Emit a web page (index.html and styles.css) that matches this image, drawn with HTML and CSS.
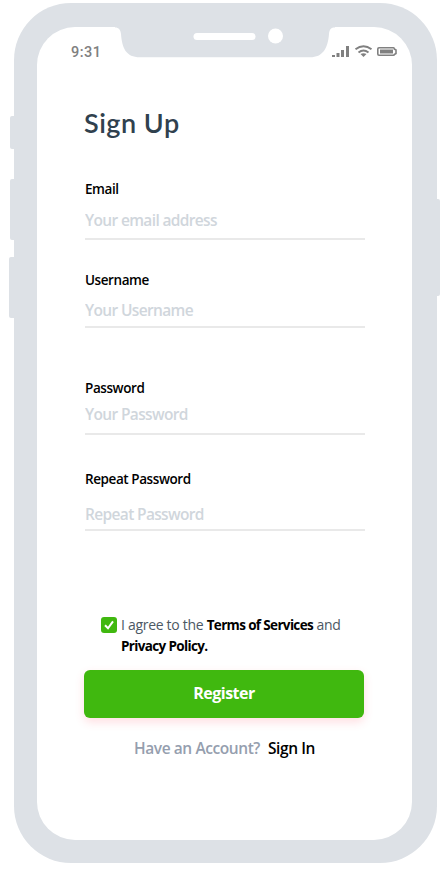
FILE: index.html
```html
<!DOCTYPE html>
<html lang="en">
<head>
<meta charset="utf-8">
<title>Sign Up</title>
<link rel="stylesheet" href="styles.css">
</head>
<body>
<div class="phone">
  <i class="key key-mute"></i><i class="key key-up"></i><i class="key key-down"></i><i class="key key-power"></i>
  <svg class="notch" width="220" height="31" viewBox="0 0 220 31">
    <path fill="#dde1e6" d="M0 0V.5C4 .5 5.500 3 6 7C7 21 11 30.300 25 30.300H195C208 30.300 213 21 214 7C214.500 2 216 .5 220 .5V0Z"/>
    <rect x="78.500" y="6" width="62" height="7" rx="3.500" fill="#fff"/>
    <circle cx="160.500" cy="9" r="7.500" fill="#fff"/>
  </svg>
  <main class="screen">
    <header class="status">
      <span class="time">9:31</span>
      <svg width="66" height="14" viewBox="0 0 66 14" fill="#808080">
        <path d="M0 10h3v2H0zM4.500 8h3v4h-3zM9 5h3v7H9zM14 1h3v11h-3z"/>
        <path fill="none" stroke="#808080" stroke-width="1.900" d="M23.500 4.300Q31.500-2 39.500 4.300M26.500 7.500Q31.500 3.500 36.500 7.500"/>
        <path d="M28.500 9Q31.500 7.500 34.500 9L31.500 12Z"/>
        <path fill="none" stroke="#808080" stroke-width="1.600" d="M47 2.800H61.500Q62.300 2.800 62.300 4L64 5V8.500L62.300 9.500Q62.300 10.200 61.500 10.200H47Q45.800 10.200 45.800 9V4Q45.800 2.800 47 2.800Z"/>
        <path d="M48 4.500h13V8.500H48z"/>
      </svg>
    </header>
    <form class="form">
      <h1>Sign Up</h1>
      <label class="field email"><span>Email</span><input type="text" placeholder="Your email address"></label>
      <label class="field username"><span>Username</span><input type="text" placeholder="Your Username"></label>
      <label class="field password"><span>Password</span><input type="text" placeholder="Your Password"></label>
      <label class="field repeat"><span>Repeat Password</span><input type="text" placeholder="Repeat Password"></label>
      <div class="agree">
        <svg width="16" height="16" viewBox="0 0 16 16"><rect width="16" height="16" rx="3" fill="#40b80f"/><path d="M4 8.300L7 11.300L12 4.300" fill="none" stroke="#fff" stroke-width="2"/></svg>
        <p><span class="light">I agree to the</span> <b>Terms of Services</b> <span class="light">and</span><br><b>Privacy Policy.</b></p>
      </div>
      <button type="button">Register</button>
      <div class="signin"><span>Have an Account?</span><a>Sign In</a></div>
    </form>
  </main>
</div>
</body>
</html>
```
FILE: styles.css
```css
* { box-sizing: border-box; }
body { margin: 0; background: #fff; font-family: "Open Sans", sans-serif; }
.phone { position: relative; width: 423px; height: 860px; margin: 3px 0 0 13.500px; padding: 24px 24.500px 23.500px 23.500px; border-radius: 57px; background: #dde1e6; }
.screen { height: 812.500px; border-radius: 38px; background: #fff; padding: 17px 14px 0 34px; }
.notch { position: absolute; left: 101.500px; top: 24px; }
.key { position: absolute; background: #dde1e6; border-radius: 2px; }
.key-mute { left: -3.500px; top: 113px; width: 8px; height: 33px; }
.key-up { left: -3.500px; top: 176px; width: 8px; height: 61px; }
.key-down { left: -4.500px; top: 254px; width: 8px; height: 61px; }
.key-power { left: 418.500px; top: 196px; width: 8px; height: 97px; }
.status { display: flex; justify-content: space-between; height: 16px; }
.time { font: 500 14.500px/18px Roboto, sans-serif; letter-spacing: .5px; color: #808080; }
.status svg { margin-top: 1px; }
.form { width: 281px; margin-left: 13px; }
h1 { margin: 45px 0 0; font: 600 27px/36px Lato, sans-serif; letter-spacing: .5px; color: #30414e; }
.field { display: flex; flex-direction: column; justify-content: space-between; margin-left: 1px; width: 280px; border-bottom: 2px solid #e9e9e9; }
.field span { font-size: 13.500px; font-weight: 600; line-height: 20px; letter-spacing: -.42px; color: #000; }
input { border: 0; padding: 0; outline: 0; background: none; font: inherit; font-size: 15.500px; font-weight: 600; height: 22px; line-height: 22px; letter-spacing: -.65px; }
input::placeholder { color: #d0d6dc; opacity: 1; }
.email { margin-top: 38px; height: 61px; padding-bottom: 7px; }
.username { margin-top: 30px; height: 58px; padding-bottom: 5px; }
.password { margin-top: 50px; height: 57px; padding-bottom: 8px; }
.repeat { margin-top: 34px; height: 62px; padding-bottom: 4px; }
.agree { display: flex; gap: 4px; height: 44px; margin: 83px 0 0 17px; }
.agree svg { margin-top: 3px; }
.agree p { margin: 0; font-size: 14px; line-height: 21px; white-space: nowrap; letter-spacing: -.3px; }
.agree b { font-weight: 700; font-size: 13.500px; line-height: 1; color: #000; letter-spacing: -.65px; }
.light { color: #4c5864; }
button { display: block; width: 280px; height: 48px; margin-top: 12px; padding-bottom: 4px; border: 0; border-radius: 6px; background: #40b80f; color: #fff; font: inherit; font-size: 16px; font-weight: 700; letter-spacing: -.5px; box-shadow: 0 4px 10px rgba(255, 70, 90, .18); }
.signin { display: flex; gap: 8px; margin: 19px 0 0 50px; font-size: 15.500px; line-height: 22px; font-weight: 600; letter-spacing: -.42px; white-space: nowrap; color: #959eae; }
.signin a { color: #000; }
```
